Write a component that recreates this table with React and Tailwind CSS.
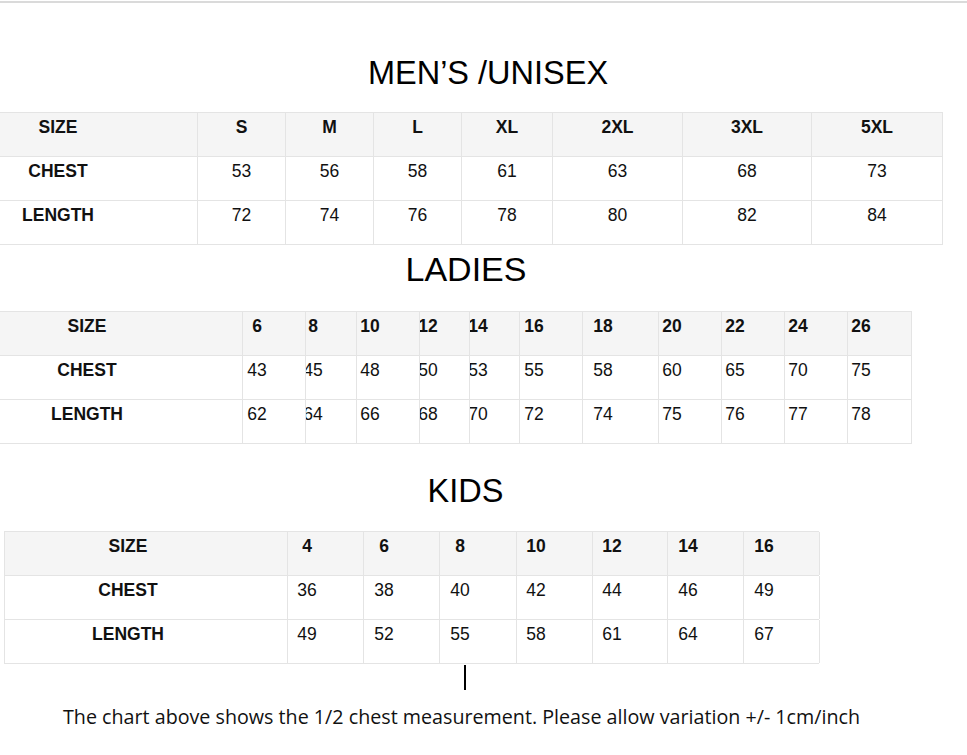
import React from "react";

// column widths + inner box (text is centred inside the box, box sits at the cell's left edge)
const mens = {
  cols: [
    { w: "w-[198px]", box: "w-[116px]" },
    { w: "w-[88px]", box: "w-full" },
    { w: "w-[88px]", box: "w-full" },
    { w: "w-[88px]", box: "w-full" },
    { w: "w-[91px]", box: "w-full" },
    { w: "w-[130px]", box: "w-full" },
    { w: "w-[129px]", box: "w-full" },
    { w: "w-[131px]", box: "w-full" },
  ],
  rows: [
    ["SIZE", "S", "M", "L", "XL", "2XL", "3XL", "5XL"],
    ["CHEST", "53", "56", "58", "61", "63", "68", "73"],
    ["LENGTH", "72", "74", "76", "78", "80", "82", "84"],
  ],
};

const ladies = {
  cols: [
    { w: "w-[243px]", box: "w-[174px]" },
    { w: "w-[63px]", box: "w-[28px]" },
    { w: "w-[51px]", box: "w-[14px]" },
    { w: "w-[63px]", box: "w-[26px]" },
    { w: "w-[50px]", box: "w-[16px]" },
    { w: "w-[50px]", box: "w-[16px]" },
    { w: "w-[63px]", box: "w-[28px]" },
    { w: "w-[76px]", box: "w-[40px]" },
    { w: "w-[63px]", box: "w-[26px]" },
    { w: "w-[63px]", box: "w-[26px]" },
    { w: "w-[63px]", box: "w-[26px]" },
    { w: "w-[64px]", box: "w-[26px]" },
  ],
  rows: [
    ["SIZE", "6", "8", "10", "12", "14", "16", "18", "20", "22", "24", "26"],
    ["CHEST", "43", "45", "48", "50", "53", "55", "58", "60", "65", "70", "75"],
    ["LENGTH", "62", "64", "66", "68", "70", "72", "74", "75", "76", "77", "78"],
  ],
};

const kids = {
  cols: [
    { w: "w-[283px]", box: "w-[246px]" },
    { w: "w-[76px]", box: "w-[38px]" },
    { w: "w-[76px]", box: "w-[40px]" },
    { w: "w-[77px]", box: "w-[40px]" },
    { w: "w-[76px]", box: "w-[38px]" },
    { w: "w-[75px]", box: "w-[38px]" },
    { w: "w-[76px]", box: "w-[40px]" },
    { w: "w-[76px]", box: "w-[40px]" },
  ],
  rows: [
    ["SIZE", "4", "6", "8", "10", "12", "14", "16"],
    ["CHEST", "36", "38", "40", "42", "44", "46", "49"],
    ["LENGTH", "49", "52", "55", "58", "61", "64", "67"],
  ],
};

const SizeTable = ({ data, className = "", leftBorder = false }) => (
  <div className={`flex flex-col border-t border-[#e4e4e4] ${leftBorder ? "border-l" : ""} ${className}`}>
    {data.rows.map((row, ri) => (
      <div
        key={ri}
        className={`flex h-[44px] border-b border-[#e4e4e4] ${ri === 0 ? "bg-[#f5f5f5]" : "bg-white"}`}
      >
        {row.map((cell, ci) => (
          <div
            key={ci}
            className={`${data.cols[ci].w} shrink-0 h-full border-r border-[#e4e4e4] flex overflow-hidden`}
          >
            <div className={`${data.cols[ci].box} shrink-0 flex justify-center pt-[2px]`}>
              <span
                className={`whitespace-nowrap leading-[24px] text-[17.5px] text-[#111] ${
                  ri === 0 || ci === 0 ? "font-bold" : "font-normal"
                }`}
              >
                {cell}
              </span>
            </div>
          </div>
        ))}
      </div>
    ))}
  </div>
);

export default function App() {
  return (
    <div className="w-[967px] h-[755px] bg-white overflow-hidden font-['Liberation_Sans',Arial,sans-serif] text-black">
      <div className="h-[2px] mt-px bg-[#dadada]" />

      <h1 className="mt-[50px] h-[40px] leading-[40px] text-[32.5px] font-normal text-center pl-[9px]">
        MEN’S /UNISEX
      </h1>
      <SizeTable data={mens} className="mt-[19px] w-[943px]" />

      <h2 className="mt-[4px] h-[40px] leading-[40px] text-[34px] font-normal text-center pr-[35px]">
        LADIES
      </h2>
      <SizeTable data={ladies} className="mt-[22px] w-[912px]" />

      <h2 className="mt-[27px] h-[40px] leading-[40px] text-[32.5px] font-normal text-center pr-[36px]">
        KIDS
      </h2>
      <SizeTable data={kids} className="mt-[20px] ml-[4px] w-[815px]" leftBorder />

      <div className="flex justify-start pl-[464px] mt-px">
        <div className="w-[2px] h-[25px] bg-black" />
      </div>

      <p className="mt-[14px] pl-[63px] text-[19.7px] leading-[26px] text-[#111] font-['Open_Sans',sans-serif] whitespace-nowrap">
        The chart above shows the 1/2 chest measurement. Please allow variation +/- 1cm/inch
      </p>
    </div>
  );
}
